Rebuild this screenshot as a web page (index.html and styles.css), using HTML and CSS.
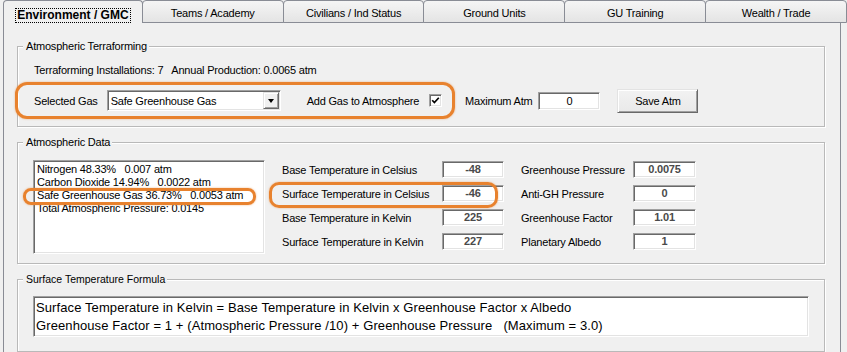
FILE: index.html
```html
<!DOCTYPE html>
<html lang="en">

<head>
    <meta charset="UTF-8">
    <title>Environment / GMC</title>
    <link rel="stylesheet" href="styles.css">
</head>

<body>

    <div class="tabs">
        <div class="tab active"><span class="focus">Environment / GMC</span></div>
        <div class="tab">Teams / Academy</div>
        <div class="tab">Civilians / Ind Status</div>
        <div class="tab">Ground Units</div>
        <div class="tab">GU Training</div>
        <div class="tab">Wealth / Trade</div>
    </div>

    <div class="panel">

        <div class="group terraform">
            <div class="group-title">Atmospheric Terraforming</div>
            <div class="info">Terraforming Installations: 7   Annual Production: 0.0065 atm</div>
            <div class="gas-row">
                <div class="highlight-box">
                    <span>Selected Gas</span>
                    <div class="combo">
                        <span class="combo-text">Safe Greenhouse Gas</span>
                        <span class="combo-btn"><span class="arrow"></span></span>
                    </div>
                    <span class="add-label">Add Gas to Atmosphere</span>
                    <span class="checkbox">
                        <svg width="9" height="9" viewBox="0 0 9 9">
                            <path d="M1.2 4.2 L3.4 6.6 L7.8 1.8" fill="none" stroke="#000" stroke-width="1.7" />
                        </svg>
                    </span>
                </div>
                <span class="max-label">Maximum Atm</span>
                <div class="field max-field">0</div>
                <div class="button">Save Atm</div>
            </div>
        </div>

        <div class="group data">
            <div class="group-title">Atmospheric Data</div>
            <div class="data-body">
                <div class="listbox">
                    <div class="list-item">Nitrogen 48.33%   0.007 atm</div>
                    <div class="list-item">Carbon Dioxide 14.94%   0.0022 atm</div>
                    <div class="list-item">Safe Greenhouse Gas 36.73%   0.0053 atm</div>
                    <div class="list-item">Total Atmospheric Pressure: 0.0145</div>
                </div>
                <div class="readings">
                    <span>Base Temperature in Celsius</span>
                    <span class="field value">-48</span>
                    <span class="lbl2">Greenhouse Pressure</span>
                    <span class="field value">0.0075</span>

                    <span>Surface Temperature in Celsius</span>
                    <span class="field value">-46</span>
                    <span class="lbl2">Anti-GH Pressure</span>
                    <span class="field value">0</span>

                    <span>Base Temperature in Kelvin</span>
                    <span class="field value">225</span>
                    <span class="lbl2">Greenhouse Factor</span>
                    <span class="field value">1.01</span>

                    <span>Surface Temperature in Kelvin</span>
                    <span class="field value">227</span>
                    <span class="lbl2">Planetary Albedo</span>
                    <span class="field value">1</span>
                </div>
                <div class="mark mark-gas"></div>
                <div class="mark mark-temp"></div>
            </div>
        </div>

        <div class="group formula">
            <div class="group-title small">Surface Temperature Formula</div>
            <div class="formula-box">Surface Temperature in Kelvin = Base Temperature in Kelvin x Greenhouse Factor x Albedo
Greenhouse Factor = 1 + (Atmospheric Pressure /10) + Greenhouse Pressure   (Maximum = 3.0)</div>
        </div>

    </div>

</body>

</html>
```

FILE: styles.css
```css
body {
    margin: 0;
    background-color: #f0f0f0;
    font-family: "Liberation Sans", Arial, sans-serif;
    font-size: 11px;
    letter-spacing: -0.2px;
    color: #000;
    overflow: hidden;
}

/* tab strip */
.tabs {
    display: flex;
    height: 23px;
    padding-left: 3px;
}

.tab {
    box-sizing: border-box;
    width: 142px;
    height: 23px;
    margin-left: -1px;
    padding-top: 4px;
    line-height: 17px;
    text-align: center;
    white-space: nowrap;
    border: 1px solid #898c95;
    border-radius: 4px 4px 0 0;
    background: linear-gradient(#f5f5f5, #e4e4e4);
}

.tab.active {
    width: 140px;
    margin-left: 0;
    padding-top: 6px;
    border-bottom: none;
    background: #f0f0f0;
    font-weight: 700;
    font-size: 12px;
    letter-spacing: 0;
}

.focus {
    display: inline-block;
    line-height: 13px;
    border: 1px dotted #000;
    padding: 0 1px;
}

.panel {
    box-sizing: border-box;
    width: 838px;
    height: calc(100vh - 23px);
    margin-left: 3px;
    padding: 23px 15px 0 13px;
    border-left: 1px solid #898c95;
    border-right: 1px solid #898c95;
}

/* group boxes */
.group {
    border: 1px solid #b9b9b9;
    box-shadow: inset 1px 1px 0 #fff, 1px 1px 0 #fff;
    padding: 0 15px;
}

.group + .group {
    margin-top: 15px;
}

.group-title {
    width: fit-content;
    margin: -7px 0 0 -10px;
    padding: 0 2px 0 3px;
    line-height: 13px;
    background-color: #f0f0f0;
}

.group-title.small {
    font-size: 10.5px;
    letter-spacing: 0;
}

.terraform {
    padding-bottom: 7px;
}

.data {
    padding-bottom: 9px;
}

.formula {
    padding-bottom: 14px;
}

.info {
    margin: 11px 0 0 1px;
    line-height: 13px;
    white-space: pre;
}

/* selected gas row */
.gas-row {
    display: flex;
    align-items: center;
    margin: 5px 0 0 -18px;
}

.highlight-box {
    box-sizing: border-box;
    display: flex;
    align-items: center;
    width: 440px;
    height: 37px;
    padding-left: 16px;
    border: 3px solid #e8822e;
    border-radius: 12px;
    box-shadow: 0 0 2px rgba(232, 130, 46, 0.6);
}

.field,
.combo,
.checkbox,
.listbox,
.formula-box {
    box-sizing: border-box;
    background-color: #fff;
    border: 1px solid;
    border-color: #a0a0a0 #fff #fff #a0a0a0;
    box-shadow: inset 1px 1px 0 #696969, inset -1px -1px 0 #e3e3e3;
}

.combo {
    display: flex;
    align-items: center;
    width: 174px;
    height: 21px;
    margin-left: 9px;
    padding: 0 1px 0 3px;
}

.combo-btn {
    box-sizing: border-box;
    display: flex;
    align-items: center;
    justify-content: center;
    width: 16px;
    height: 17px;
    margin-left: auto;
    background-color: #f0f0f0;
    border: 1px solid;
    border-color: #e3e3e3 #696969 #696969 #e3e3e3;
    box-shadow: inset 1px 1px 0 #fff, inset -1px -1px 0 #a0a0a0;
}

.arrow {
    width: 0;
    height: 0;
    border-style: solid;
    border-width: 4px 3.5px 0;
    border-color: #000 transparent transparent;
}

.add-label {
    margin-left: 26px;
}

.checkbox {
    display: flex;
    align-items: center;
    justify-content: center;
    width: 13px;
    height: 13px;
    margin-left: 10px;
}

.max-label {
    margin-left: 10px;
}

.field {
    text-align: center;
}

.max-field {
    width: 62px;
    height: 18px;
    line-height: 16px;
    margin-left: 6px;
}

.button {
    box-sizing: border-box;
    width: 81px;
    height: 24px;
    margin-left: 17px;
    line-height: 22px;
    text-align: center;
    background: linear-gradient(#f2f2f2, #e9e9e9);
    border: 1px solid;
    border-color: #e3e3e3 #696969 #696969 #e3e3e3;
    box-shadow: inset 1px 1px 0 #fff, inset -1px -1px 0 #a0a0a0;
}

/* atmospheric data */
.data-body {
    position: relative;
    display: flex;
    align-items: flex-start;
    margin-top: 11px;
}

.listbox {
    width: 232px;
    height: 94px;
    padding: 2px 3px;
    line-height: 13px;
}

.list-item {
    white-space: pre;
}

.readings {
    display: grid;
    grid-template-columns: 160px 62px 129px 63px;
    grid-auto-rows: 17px;
    row-gap: 7px;
    align-items: center;
    margin: 1px 0 0 17px;
    white-space: nowrap;
}

.lbl2 {
    padding-left: 17px;
}

.value {
    height: 17px;
    line-height: 15px;
    font-weight: 700;
    color: #4a4a4a;
}

.mark {
    position: absolute;
    box-sizing: border-box;
    border: 3px solid #e8822e;
    box-shadow: 0 0 2px rgba(232, 130, 46, 0.6);
}

.mark-gas {
    left: -10px;
    top: 28px;
    width: 233px;
    height: 17px;
    border-radius: 8px;
}

.mark-temp {
    left: 236px;
    top: 22px;
    width: 229px;
    height: 26px;
    border-radius: 10px;
}

/* formula */
.formula-box {
    width: 776px;
    height: 41px;
    margin-top: 10px;
    padding: 2px 0 0 2px;
    font-size: 13px;
    letter-spacing: 0.1px;
    line-height: 18px;
    white-space: pre;
}
```
